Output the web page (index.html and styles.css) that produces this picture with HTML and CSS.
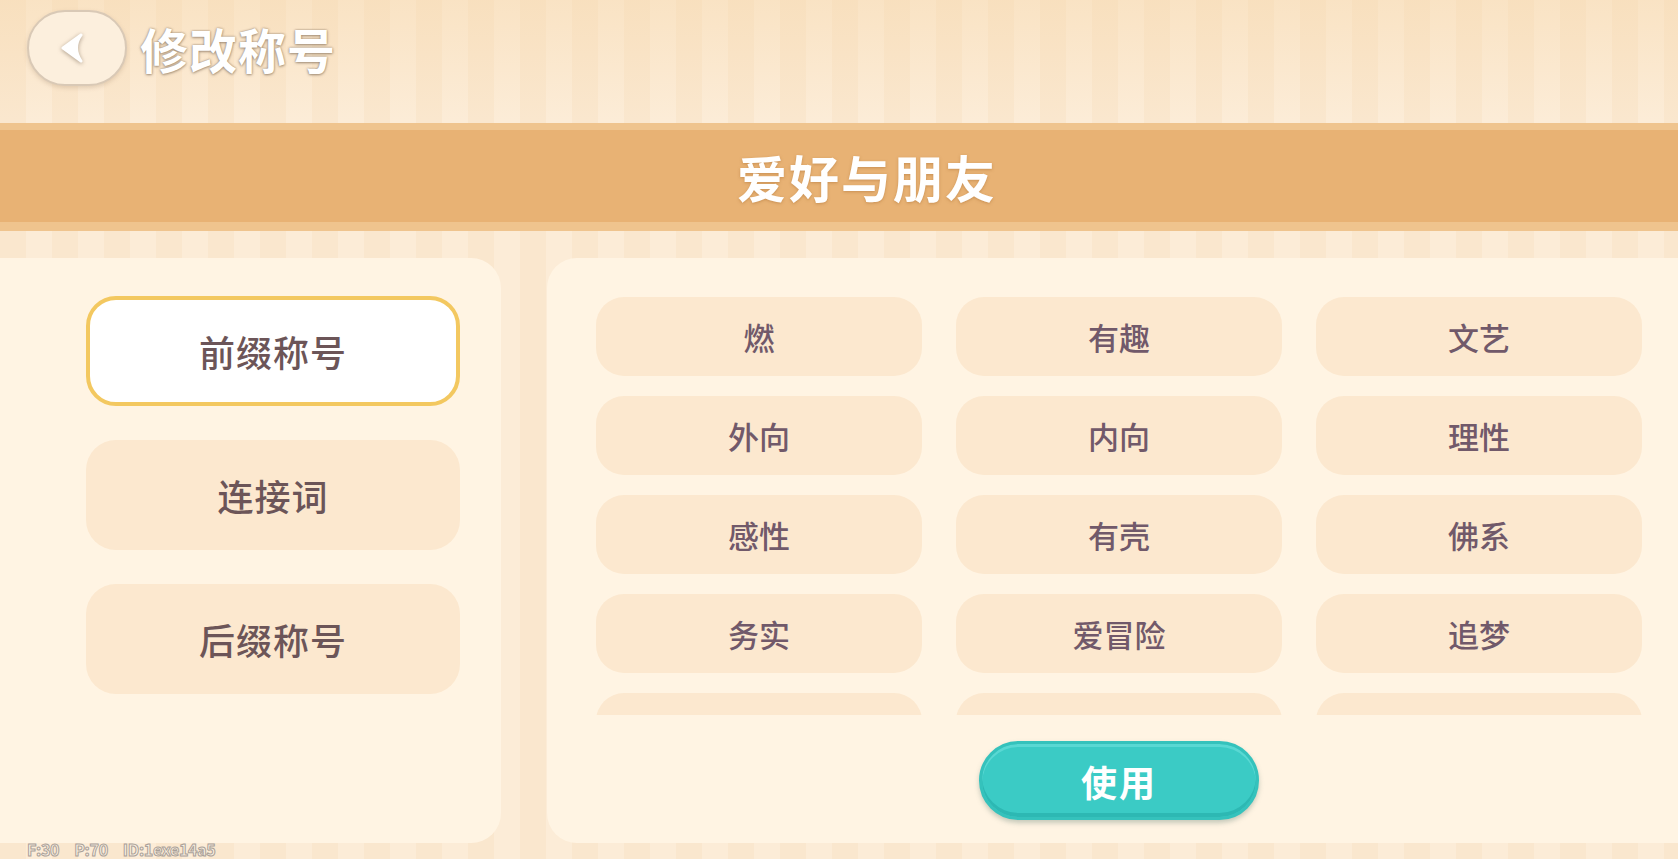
FILE: index.html
```html
<!DOCTYPE html>
<html lang="zh-CN">
<head>
  <meta charset="UTF-8" />
  <meta name="viewport" content="width=device-width, initial-scale=1.0"/>
  <title>修改称号</title>
  <link rel="stylesheet" href="styles.css">
</head>
<body>
  <header class="topbar">
    <button class="back-btn" aria-label="返回">
      <svg width="26" height="32" viewBox="0 0 26 32">
        <path d="M22 3 L4 16 L22 29 Q13 16 22 3 Z" fill="#fff" stroke="#fff" stroke-width="3" stroke-linejoin="round"/>
      </svg>
    </button>
    <h1 class="page-title">修改称号</h1>
  </header>

  <div class="band">
    <h2>爱好与朋友</h2>
  </div>

  <main class="content">
    <aside class="side-panel">
      <button class="tab active">前缀称号</button>
      <button class="tab">连接词</button>
      <button class="tab">后缀称号</button>
    </aside>

    <section class="list-panel">
      <div class="title-grid">
        <div class="title-item">燃</div>
        <div class="title-item">有趣</div>
        <div class="title-item">文艺</div>
        <div class="title-item">外向</div>
        <div class="title-item">内向</div>
        <div class="title-item">理性</div>
        <div class="title-item">感性</div>
        <div class="title-item">有壳</div>
        <div class="title-item">佛系</div>
        <div class="title-item">务实</div>
        <div class="title-item">爱冒险</div>
        <div class="title-item">追梦</div>
        <div class="title-item"></div>
        <div class="title-item"></div>
        <div class="title-item"></div>
      </div>
      <button class="use-btn">使用</button>
    </section>
  </main>

  <div class="debug-info">
    <span>F:30</span>
    <span>P:70</span>
    <span>ID:1exe14a5</span>
  </div>
</body>
</html>
```

FILE: styles.css
```css
* {
  margin: 0;
  padding: 0;
  box-sizing: border-box;
  font-family: "Noto Sans CJK SC", "Noto Sans", sans-serif;
}

html, body {
  width: 1678px;
  height: 859px;
  overflow: hidden;
}

body {
  position: relative;
  background:
    linear-gradient(180deg, rgba(245, 210, 160, 0.35) 0, rgba(245, 210, 160, 0) 120px),
    repeating-linear-gradient(90deg, #fae7ce 0 26px, #fcecd7 26px 52px);
}

button {
  border: none;
  background: none;
  cursor: pointer;
}

/* top bar */
.topbar {
  height: 123px;
  display: flex;
  align-items: flex-start;
  padding: 10px 0 0 27px;
  gap: 13px;
}

.back-btn {
  width: 100px;
  height: 76px;
  border-radius: 38px;
  background: #fcefdd;
  border: 2px solid #d9c9b6;
  box-shadow: 0 2px 4px rgba(150, 120, 90, 0.25);
  display: flex;
  align-items: center;
  justify-content: center;
  padding-right: 10px;
}

.back-btn svg {
  filter: drop-shadow(0 1px 2px rgba(120, 100, 80, 0.6));
}

.page-title {
  font-size: 48px;
  font-weight: 700;
  color: #fff;
  line-height: 76px;
  letter-spacing: 1px;
  text-shadow:
    0 0 2px rgba(140, 120, 100, 0.9),
    0 1px 3px rgba(140, 120, 100, 0.7);
}

/* category band */
.band {
  height: 108px;
  background: #e8b274;
  border-top: 7px solid #efc48e;
  border-bottom: 9px solid #efc48e;
  display: flex;
  align-items: center;
  justify-content: center;
  padding-left: 56px;
}

.band h2 {
  font-size: 50px;
  font-weight: 700;
  color: #fff;
  letter-spacing: 2px;
  text-shadow: 0 1px 3px rgba(170, 110, 50, 0.5);
}

/* panels */
.content {
  display: flex;
  gap: 46px;
  margin-top: 27px;
  height: 585px;
}

.side-panel {
  width: 501px;
  background: #fff4e3;
  border-radius: 0 30px 30px 0;
  padding: 38px 0 0 86px;
  display: flex;
  flex-direction: column;
  gap: 34px;
}

.tab {
  width: 374px;
  height: 110px;
  border-radius: 30px;
  background: #fce8cf;
  font-size: 36px;
  font-weight: 500;
  color: #6c5558;
  letter-spacing: 1px;
}

.tab.active {
  background: #fff;
  border: 4px solid #f3c860;
}

.list-panel {
  flex: 1;
  background: #fff4e3;
  border-radius: 30px 0 0 30px;
  padding: 39px 36px 0 49px;
  display: flex;
  flex-direction: column;
  align-items: center;
}

.title-grid {
  width: 100%;
  height: 418px;
  overflow: hidden;
  display: grid;
  grid-template-columns: repeat(3, 1fr);
  grid-auto-rows: 79px;
  column-gap: 34px;
  row-gap: 20px;
}

.title-item {
  background: #fce8cf;
  border-radius: 28px;
  display: flex;
  align-items: center;
  justify-content: center;
  font-size: 31px;
  font-weight: 500;
  color: #71596a;
}

.use-btn {
  margin-top: 26px;
  width: 280px;
  height: 79px;
  border-radius: 40px;
  background: #3bcbc5;
  border: 3px solid #35c2bc;
  box-shadow:
    inset 0 -4px 0 rgba(20, 150, 145, 0.35),
    inset 0 3px 0 rgba(120, 230, 225, 0.5),
    0 3px 5px rgba(90, 120, 110, 0.35);
  font-size: 36px;
  font-weight: 700;
  color: #fff;
  letter-spacing: 2px;
}

/* build info in the corner */
.debug-info {
  position: absolute;
  left: 27px;
  bottom: 1px;
  height: 18px;
  display: flex;
  gap: 15px;
  font-family: "Liberation Sans", sans-serif;
  font-size: 16px;
  line-height: 18px;
  font-weight: 700;
  letter-spacing: -0.3px;
  color: #fcf1e2;
  -webkit-text-stroke: 1px #aaa199;
}
```
